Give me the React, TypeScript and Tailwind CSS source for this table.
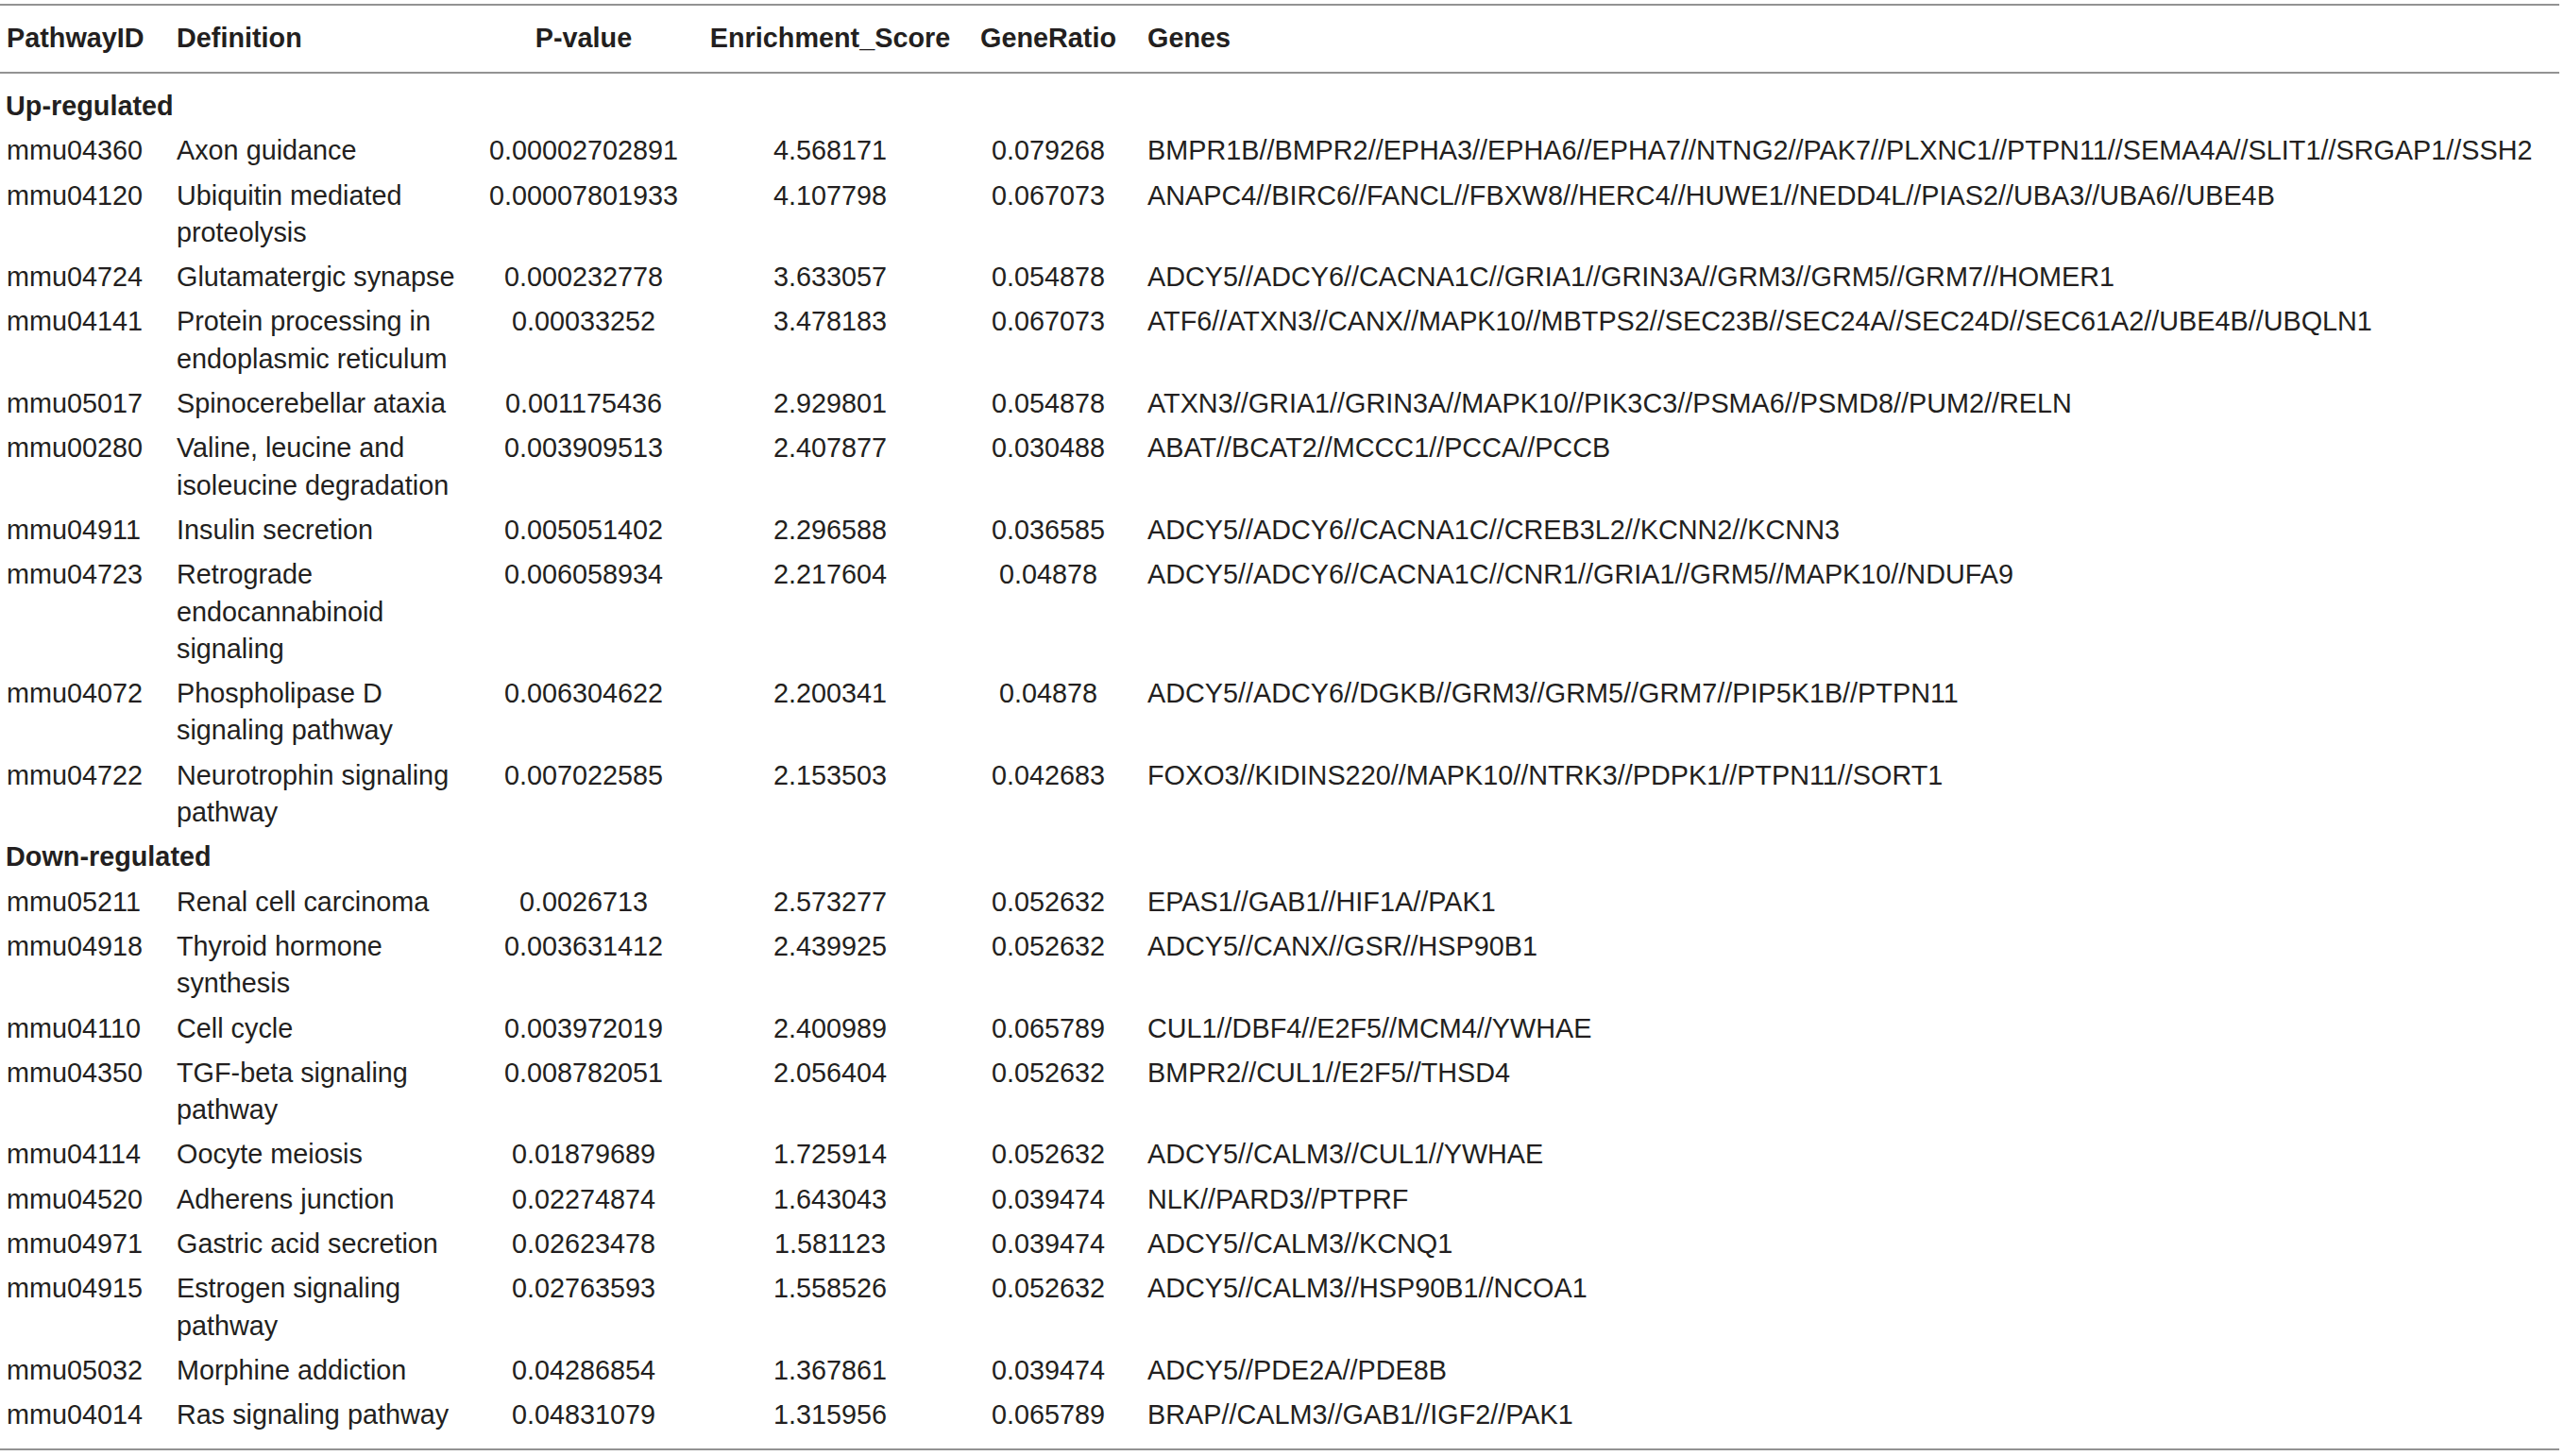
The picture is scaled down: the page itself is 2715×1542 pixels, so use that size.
type Row = [string, string, string, string, string, string]

const upRows: Row[] = [
  ['mmu04360', 'Axon guidance', '0.00002702891', '4.568171', '0.079268', 'BMPR1B//BMPR2//EPHA3//EPHA6//EPHA7//NTNG2//PAK7//PLXNC1//PTPN11//SEMA4A//SLIT1//SRGAP1//SSH2'],
  ['mmu04120', 'Ubiquitin mediated proteolysis', '0.00007801933', '4.107798', '0.067073', 'ANAPC4//BIRC6//FANCL//FBXW8//HERC4//HUWE1//NEDD4L//PIAS2//UBA3//UBA6//UBE4B'],
  ['mmu04724', 'Glutamatergic synapse', '0.000232778', '3.633057', '0.054878', 'ADCY5//ADCY6//CACNA1C//GRIA1//GRIN3A//GRM3//GRM5//GRM7//HOMER1'],
  ['mmu04141', 'Protein processing in endoplasmic reticulum', '0.00033252', '3.478183', '0.067073', 'ATF6//ATXN3//CANX//MAPK10//MBTPS2//SEC23B//SEC24A//SEC24D//SEC61A2//UBE4B//UBQLN1'],
  ['mmu05017', 'Spinocerebellar ataxia', '0.001175436', '2.929801', '0.054878', 'ATXN3//GRIA1//GRIN3A//MAPK10//PIK3C3//PSMA6//PSMD8//PUM2//RELN'],
  ['mmu00280', 'Valine, leucine and isoleucine degradation', '0.003909513', '2.407877', '0.030488', 'ABAT//BCAT2//MCCC1//PCCA//PCCB'],
  ['mmu04911', 'Insulin secretion', '0.005051402', '2.296588', '0.036585', 'ADCY5//ADCY6//CACNA1C//CREB3L2//KCNN2//KCNN3'],
  ['mmu04723', 'Retrograde endocannabinoid signaling', '0.006058934', '2.217604', '0.04878', 'ADCY5//ADCY6//CACNA1C//CNR1//GRIA1//GRM5//MAPK10//NDUFA9'],
  ['mmu04072', 'Phospholipase D signaling pathway', '0.006304622', '2.200341', '0.04878', 'ADCY5//ADCY6//DGKB//GRM3//GRM5//GRM7//PIP5K1B//PTPN11'],
  ['mmu04722', 'Neurotrophin signaling pathway', '0.007022585', '2.153503', '0.042683', 'FOXO3//KIDINS220//MAPK10//NTRK3//PDPK1//PTPN11//SORT1'],
]

const downRows: Row[] = [
  ['mmu05211', 'Renal cell carcinoma', '0.0026713', '2.573277', '0.052632', 'EPAS1//GAB1//HIF1A//PAK1'],
  ['mmu04918', 'Thyroid hormone synthesis', '0.003631412', '2.439925', '0.052632', 'ADCY5//CANX//GSR//HSP90B1'],
  ['mmu04110', 'Cell cycle', '0.003972019', '2.400989', '0.065789', 'CUL1//DBF4//E2F5//MCM4//YWHAE'],
  ['mmu04350', 'TGF-beta signaling pathway', '0.008782051', '2.056404', '0.052632', 'BMPR2//CUL1//E2F5//THSD4'],
  ['mmu04114', 'Oocyte meiosis', '0.01879689', '1.725914', '0.052632', 'ADCY5//CALM3//CUL1//YWHAE'],
  ['mmu04520', 'Adherens junction', '0.02274874', '1.643043', '0.039474', 'NLK//PARD3//PTPRF'],
  ['mmu04971', 'Gastric acid secretion', '0.02623478', '1.581123', '0.039474', 'ADCY5//CALM3//KCNQ1'],
  ['mmu04915', 'Estrogen signaling pathway', '0.02763593', '1.558526', '0.052632', 'ADCY5//CALM3//HSP90B1//NCOA1'],
  ['mmu05032', 'Morphine addiction', '0.04286854', '1.367861', '0.039474', 'ADCY5//PDE2A//PDE8B'],
  ['mmu04014', 'Ras signaling pathway', '0.04831079', '1.315956', '0.065789', 'BRAP//CALM3//GAB1//IGF2//PAK1'],
]

// shared column template so header and body line up
const cols = 'grid grid-cols-[180px_310px_256px_266px_196px_1fr]'

function DataRow({ row }: { row: Row }) {
  const [id, def, p, score, ratio, genes] = row
  return (
    <div className={`${cols} py-[4px]`}>
      <div className="pl-[7px]">{id}</div>
      <div className="pl-[7px]">{def}</div>
      <div className="text-center">{p}</div>
      <div className="text-center">{score}</div>
      <div className="text-center">{ratio}</div>
      <div className="pl-[7px] whitespace-nowrap">{genes}</div>
    </div>
  )
}

function Section({ title }: { title: string }) {
  return <div className="py-[4px] pl-[6px] font-bold">{title}</div>
}

export default function App() {
  return (
    <div className="w-[2715px] h-[1542px] bg-white overflow-hidden">
      <div
        className="w-[2710px] mt-[4px] text-[28.8px] leading-[39.3px] text-[#231f20] border-y-2 border-[#939393] pb-[11px]"
        style={{ fontFamily: '"Liberation Sans", Arial, sans-serif' }}
      >
        <div className={`${cols} h-[72px] items-center font-bold border-b-2 border-[#939393]`}>
          <div className="pl-[7px]">PathwayID</div>
          <div className="pl-[7px]">Definition</div>
          <div className="text-center">P-value</div>
          <div className="text-center">Enrichment_Score</div>
          <div className="text-center">GeneRatio</div>
          <div className="pl-[7px]">Genes</div>
        </div>
        <div className="pt-[11px]">
          <Section title="Up-regulated" />
          {upRows.map(r => (
            <DataRow key={r[0]} row={r} />
          ))}
          <Section title="Down-regulated" />
          {downRows.map(r => (
            <DataRow key={r[0]} row={r} />
          ))}
        </div>
      </div>
    </div>
  )
}
